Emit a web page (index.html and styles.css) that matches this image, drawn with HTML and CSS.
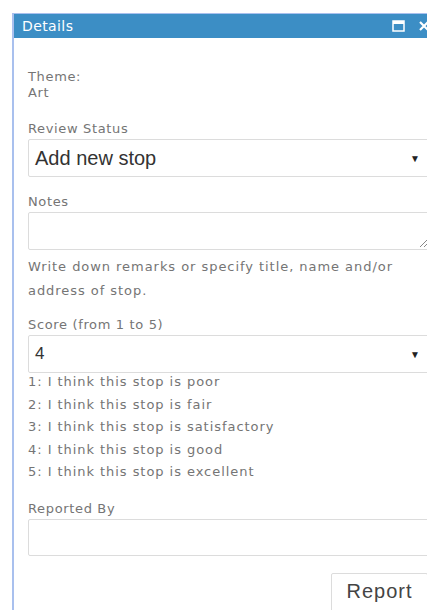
FILE: index.html
```html
<!DOCTYPE html>
<html>
<head>
<meta charset="utf-8">
<link rel="stylesheet" href="styles.css">
</head>
<body>
<div class="panel">
  <div class="titlebar">
    <span class="title">Details</span>
    <span class="tools">
      <svg class="icon" width="13" height="12" viewBox="0 0 13 12"><rect x="1" y="1" width="11" height="10" fill="none" stroke="#fff" stroke-width="1.5"/><rect x="1" y="1" width="11" height="3" fill="#fff"/></svg>
      <svg class="icon" width="12" height="12" viewBox="0 0 12 12"><path d="M2 2 L10 10 M10 2 L2 10" stroke="#fff" stroke-width="2.2"/></svg>
    </span>
  </div>
  <div class="content">
    <div class="theme">
      <div>Theme:</div>
      <div>Art</div>
    </div>

    <div class="field status">
      <label class="label">Review Status</label>
      <div class="select big"><span>Add new stop</span><span class="caret">▼</span></div>
    </div>

    <div class="field notes">
      <label class="label">Notes</label>
      <div class="textarea">
        <svg class="grip" width="9" height="9" viewBox="0 0 9 9"><path d="M1 9 L9 1 M5 9 L9 5" stroke="#888" stroke-width="1"/></svg>
      </div>
      <p class="hint">Write down remarks or specify title, name and/or address of stop.</p>
    </div>

    <div class="field score">
      <label class="label">Score (from 1 to 5)</label>
      <div class="select"><span>4</span><span class="caret">▼</span></div>
      <ul class="scale">
        <li>1: I think this stop is poor</li>
        <li>2: I think this stop is fair</li>
        <li>3: I think this stop is satisfactory</li>
        <li>4: I think this stop is good</li>
        <li>5: I think this stop is excellent</li>
      </ul>
    </div>

    <div class="field">
      <label class="label">Reported By</label>
      <div class="input"></div>
    </div>

    <div class="actions">
      <button class="btn">Report</button>
    </div>
  </div>
</div>
</body>
</html>
```
FILE: styles.css
```css
html, body {
  margin: 0;
  padding: 0;
  background: #fff;
  overflow: hidden;
  height: 610px;
}

.panel {
  margin: 13px 0 0 12px;
  width: 440px;
  height: 620px;
  border-left: 2px solid #a9c0ee;
  border-top: 1px solid #a9c0ee;
  font-family: "DejaVu Sans", sans-serif;
  color: #757575;
  letter-spacing: 0.65px;
}

.titlebar {
  height: 24px;
  background: #3c8ec5;
  display: flex;
  align-items: center;
  justify-content: space-between;
  padding: 0 0 0 8px;
}

.title {
  color: #fff;
  font-size: 14px;
  letter-spacing: 0.4px;
}

.tools {
  display: flex;
  gap: 13px;
  align-items: center;
  padding-right: 24px;
}

.icon {
  display: block;
}

.content {
  padding: 31px 0 0 14px;
}

.theme {
  font-size: 13px;
  line-height: 16px;
  margin-bottom: 19px;
}

.field {
  margin-bottom: 10px;
}

.field.status {
  margin-bottom: 16px;
}

.field.notes {
  margin-bottom: 13px;
}

.field.score {
  margin-bottom: 16px;
}

.label {
  display: block;
  font-size: 13px;
  line-height: 18px;
  margin-bottom: 1px;
}

.select, .input, .textarea {
  box-sizing: border-box;
  width: 420px;
  border: 1px solid #dcdcdc;
  border-radius: 2px;
  background: #fff;
}

.select {
  height: 38px;
  display: flex;
  align-items: center;
  justify-content: space-between;
  padding: 0 27px 0 6px;
  font-family: "Liberation Sans", Arial, sans-serif;
  letter-spacing: 0;
  color: #333;
  font-size: 17px;
}

.select.big {
  font-size: 20px;
}

.caret {
  font-size: 10px;
  color: #222;
}

.textarea {
  height: 38px;
  position: relative;
}

.grip {
  position: absolute;
  right: 19px;
  bottom: 2px;
}

.hint {
  margin: 5px 0 0;
  font-size: 13px;
  line-height: 24px;
  width: 384px;
  letter-spacing: 0.95px;
}

.scale {
  list-style: none;
  margin: -2px 0 0;
  padding: 0;
  font-size: 13px;
  line-height: 22.5px;
  letter-spacing: 0.95px;
}

.input {
  height: 37px;
}

.actions {
  display: flex;
  justify-content: flex-end;
  padding-right: 26px;
  margin-top: 17px;
}

.btn {
  width: 97px;
  height: 44px;
  border: 1px solid #dcdcdc;
  border-radius: 2px;
  background: #fff;
  font-family: "Liberation Sans", Arial, sans-serif;
  font-size: 20px;
  letter-spacing: 1px;
  color: #444;
  padding: 0 0 6px;
}
```
